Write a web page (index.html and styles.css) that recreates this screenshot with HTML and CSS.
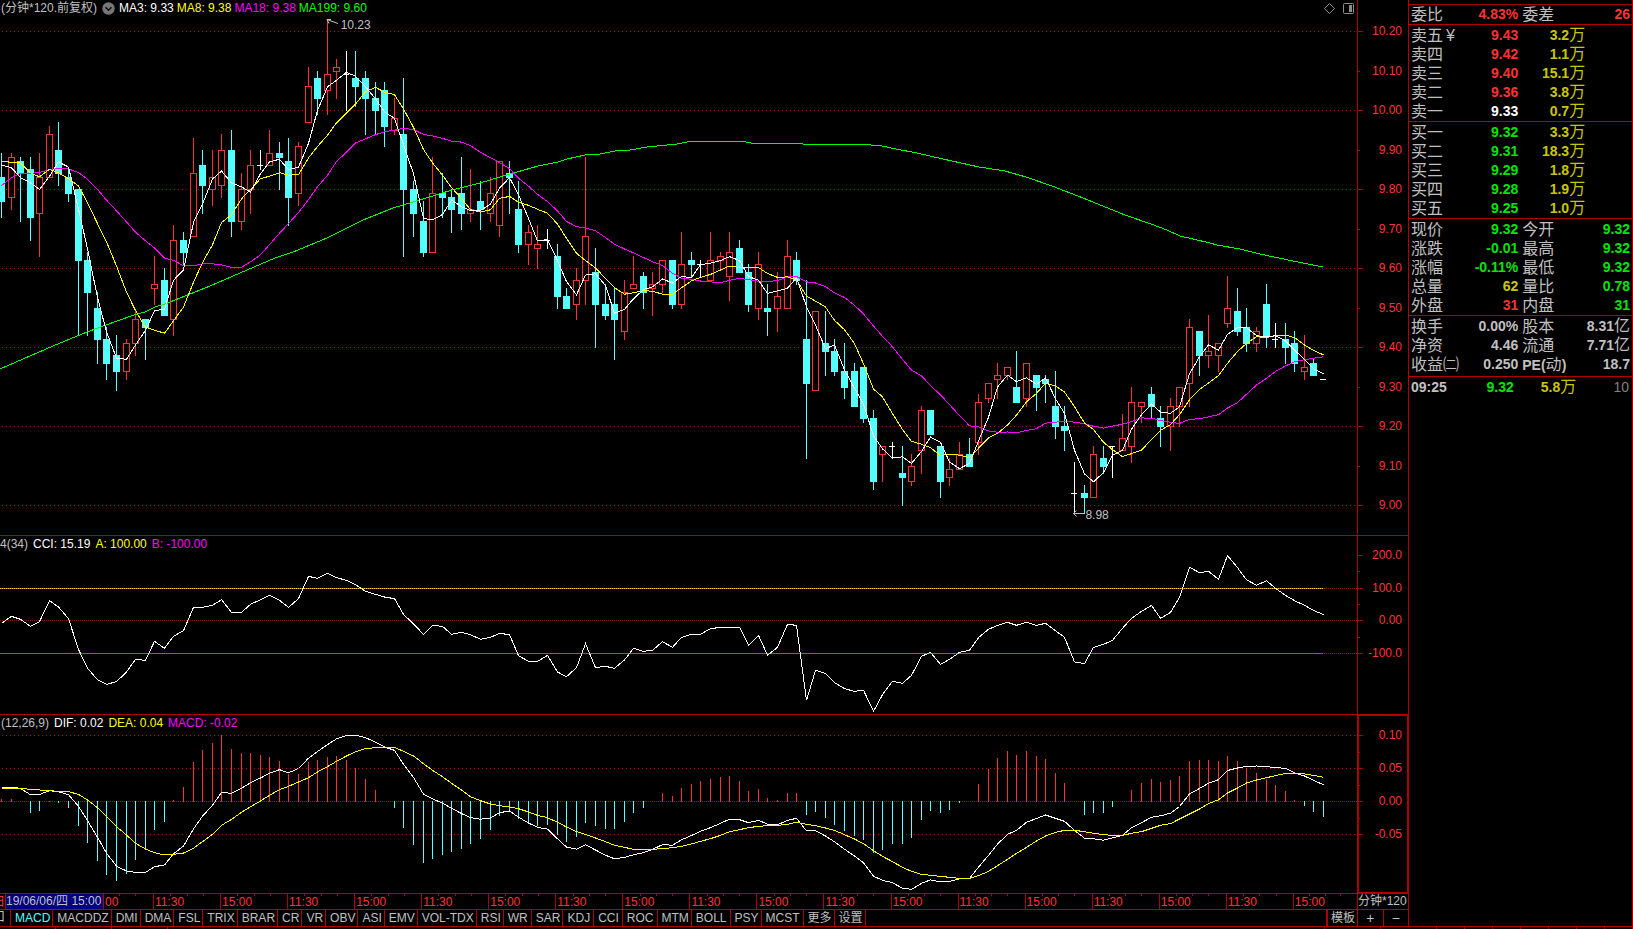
FILE: index.html
```html
<!DOCTYPE html>
<html lang="zh-CN">
<head>
<meta charset="utf-8">
<meta name="viewport" content="width=device-width, initial-scale=1">
<title>分钟*120 前复权</title>
<link rel="stylesheet" href="styles.css">
</head>
<body>
<div class="terminal">
  <div class="workspace">
    <main class="charts">
      <section class="panel panel-price">
        <div class="plot">
          <svg id="price" class="canvas" viewBox="0 0 1357 535" preserveAspectRatio="none" role="img" aria-label="K线"></svg>
          <header class="readout readout-price">
            <span class="c-gray">(分钟*120.前复权)</span>
            <button class="icon-button" type="button" aria-label="展开">
              <svg width="13" height="13" viewBox="0 0 13 13"><circle cx="6.5" cy="6.5" r="6.2" fill="#777"/><path d="M3.5 5.2l3 3 3-3" fill="none" stroke="#111" stroke-width="1.6"/></svg>
            </button>
            <span class="c-white">MA3: 9.33</span>
            <span class="c-yellow">MA8: 9.38</span>
            <span class="c-magenta">MA18: 9.38</span>
            <span class="c-green">MA199: 9.60</span>
          </header>
          <div class="tools">
            <button class="icon-button" type="button" aria-label="标记">
              <svg width="13" height="13" viewBox="0 0 13 13"><path d="M6.5 1.5l5 5-5 5-5-5z" fill="none" stroke="#8c8c8c"/></svg>
            </button>
            <button class="icon-button" type="button" aria-label="侧栏">
              <svg width="13" height="13" viewBox="0 0 13 13"><rect x="1.5" y="1.5" width="10" height="10" rx="1" fill="none" stroke="#8c8c8c"/><path d="M7 3h3v7H7z" fill="#8c8c8c"/></svg>
            </button>
          </div>
          <span class="note note-high">
            <svg width="13" height="8" viewBox="0 0 13 8"><path d="M1 1.5l11 4M1 1.5h4M1 1.5l2 4" fill="none" stroke="#c0c0c0"/></svg>10.23</span>
          <span class="note note-low">
            <svg width="12" height="8" viewBox="0 0 12 8"><path d="M0 3.5h12M.5 3.5l3-3M.5 3.5l3 3" fill="none" stroke="#c0c0c0"/></svg>8.98</span>
        </div>
        <ol class="axis axis-price">
          <li>10.20</li><li class="minor">10.10</li><li>10.00</li><li class="minor">9.90</li><li>9.80</li><li class="minor">9.70</li><li>9.60</li><li class="minor">9.50</li><li>9.40</li><li class="minor">9.30</li><li>9.20</li><li class="minor">9.10</li><li>9.00</li>
        </ol>
      </section>

      <section class="panel panel-cci">
        <div class="plot">
          <svg id="cci" class="canvas" viewBox="0 536 1357 178" preserveAspectRatio="none" role="img" aria-label="CCI"></svg>
          <header class="readout readout-cci">
            <span class="c-gray">4(34)</span>
            <span class="c-white">CCI: 15.19</span>
            <span class="c-yellow">A: 100.00</span>
            <span class="c-magenta">B: -100.00</span>
          </header>
        </div>
        <ol class="axis axis-cci">
          <li>200.0</li><li class="minor"></li><li>100.0</li><li class="minor"></li><li>0.00</li><li class="minor"></li><li>-100.0</li>
        </ol>
      </section>

      <section class="panel panel-macd">
        <div class="plot">
          <svg id="macd" class="canvas" viewBox="0 715 1357 178" preserveAspectRatio="none" role="img" aria-label="MACD"></svg>
          <header class="readout readout-macd">
            <span class="c-gray">(12,26,9)</span>
            <span class="c-white">DIF: 0.02</span>
            <span class="c-yellow">DEA: 0.04</span>
            <span class="c-magenta">MACD: -0.02</span>
          </header>
        </div>
        <ol class="axis axis-macd">
          <li>0.10</li><li class="minor"></li><li>0.05</li><li class="minor"></li><li>0.00</li><li class="minor"></li><li>-0.05</li>
        </ol>
      </section>

      <div class="timeline">
        <ol class="times">
          <li class="time-first"><span class="clip">日</span><span class="cursor-date">19/06/06/四 15:00</span><span class="rest">00</span></li>
          <li>11:30</li><li>15:00</li><li>11:30</li><li>15:00</li><li>11:30</li><li>15:00</li><li>11:30</li><li>15:00</li><li>11:30</li><li>15:00</li><li>11:30</li><li>15:00</li><li>11:30</li><li>15:00</li><li>11:30</li><li>15:00</li><li>11:30</li><li class="time-last">15:00</li>
        </ol>
        <span class="period">分钟*120</span>
      </div>

      <nav class="tabs">
        <div class="tab-list">
          <button class="tab tab-clip" type="button">口</button>
          <button class="tab active" type="button">MACD</button>
          <button class="tab" type="button">MACDDZ</button>
          <button class="tab" type="button">DMI</button>
          <button class="tab" type="button">DMA</button>
          <button class="tab" type="button">FSL</button>
          <button class="tab" type="button">TRIX</button>
          <button class="tab" type="button">BRAR</button>
          <button class="tab" type="button">CR</button>
          <button class="tab" type="button">VR</button>
          <button class="tab" type="button">OBV</button>
          <button class="tab" type="button">ASI</button>
          <button class="tab" type="button">EMV</button>
          <button class="tab" type="button">VOL-TDX</button>
          <button class="tab" type="button">RSI</button>
          <button class="tab wide" type="button">WR</button>
          <button class="tab" type="button">SAR</button>
          <button class="tab wide" type="button">KDJ</button>
          <button class="tab wide" type="button">CCI</button>
          <button class="tab wide" type="button">ROC</button>
          <button class="tab" type="button">MTM</button>
          <button class="tab wide" type="button">BOLL</button>
          <button class="tab" type="button">PSY</button>
          <button class="tab wide" type="button">MCST</button>
          <button class="tab" type="button">更多</button>
          <button class="tab" type="button">设置</button>
          <button class="tab tab-template" type="button">模板</button>
        </div>
        <div class="zoomers">
          <button class="zoomer" type="button">+</button>
          <button class="zoomer" type="button">−</button>
        </div>
      </nav>
    </main>

    <aside class="quote">
      <table class="pairs pairs-ratio">
        <tr><th>委比</th><td class="up">4.83%</td><th>委差</th><td class="up">26</td></tr>
      </table>
      <table class="book">
        <tr><th>卖五<span class="yen">¥</span></th><td class="up">9.43</td><td class="vol">3.2<i>万</i></td><td></td></tr>
        <tr><th>卖四</th><td class="up">9.42</td><td class="vol">1.1<i>万</i></td><td></td></tr>
        <tr><th>卖三</th><td class="up">9.40</td><td class="vol">15.1<i>万</i></td><td></td></tr>
        <tr><th>卖二</th><td class="up">9.36</td><td class="vol">3.8<i>万</i></td><td></td></tr>
        <tr><th>卖一</th><td class="flat">9.33</td><td class="vol">0.7<i>万</i></td><td></td></tr>
      </table>
      <table class="book">
        <tr><th>买一</th><td class="down">9.32</td><td class="vol">3.3<i>万</i></td><td></td></tr>
        <tr><th>买二</th><td class="down">9.31</td><td class="vol">18.3<i>万</i></td><td></td></tr>
        <tr><th>买三</th><td class="down">9.29</td><td class="vol">1.8<i>万</i></td><td></td></tr>
        <tr><th>买四</th><td class="down">9.28</td><td class="vol">1.9<i>万</i></td><td></td></tr>
        <tr><th>买五</th><td class="down">9.25</td><td class="vol">1.0<i>万</i></td><td></td></tr>
      </table>
      <table class="pairs">
        <tr><th>现价</th><td class="down">9.32</td><th>今开</th><td class="down">9.32</td></tr>
        <tr><th>涨跌</th><td class="down">-0.01</td><th>最高</th><td class="down">9.32</td></tr>
        <tr><th>涨幅</th><td class="down">-0.11%</td><th>最低</th><td class="down">9.32</td></tr>
        <tr><th>总量</th><td class="vol">62</td><th>量比</th><td class="down">0.78</td></tr>
        <tr><th>外盘</th><td class="up">31</td><th>内盘</th><td class="down">31</td></tr>
      </table>
      <table class="pairs pairs-basis">
        <tr><th>换手</th><td>0.00%</td><th>股本</th><td>8.31<i>亿</i></td></tr>
        <tr><th>净资</th><td>4.46</td><th>流通</th><td>7.71<i>亿</i></td></tr>
        <tr><th>收益㈡</th><td>0.250</td><th><b>PE(</b>动<b>)</b></th><td>18.7</td></tr>
      </table>
      <table class="ticks">
        <tr><td class="tick-time">09:25</td><td class="down">9.32</td><td class="vol">5.8<i>万</i></td><td class="count">10</td></tr>
      </table>
    </aside>
  </div>
  <footer class="status"><span></span><span></span><span></span><span class="grow"></span><span></span><span></span><span class="half"></span><span class="half"></span><span class="half"></span><span class="half"></span><span class="half"></span><span class="half"></span><span class="half"></span></footer>
</div>
<script src="chart.js"></script>
</body>
</html>
```

FILE: styles.css
```css
:root {
  --line: #b00000;
  --red: #ff3232;
  --cyan: #54ffff;
  --gray: #c0c0c0;
  --yellow: #ffff00;
  --olive: #c8c800;
  --green: #00e600;
  --magenta: #ff00ff;
}

* { box-sizing: border-box; }

body {
  margin: 0;
  background: #000;
  color: var(--gray);
  font: 12px/15px "Liberation Sans", "Noto Sans CJK SC", sans-serif;
}

button {
  margin: 0;
  padding: 0;
  border: 0;
  background: none;
  color: inherit;
  font: inherit;
}

ol { margin: 0; padding: 0; list-style: none; }
i { font-style: normal; }

.c-gray { color: var(--gray); }
.c-white { color: #fff; }
.c-yellow { color: var(--yellow); }
.c-magenta { color: var(--magenta); }
.c-green { color: #00ff00; }

.terminal {
  display: flex;
  flex-direction: column;
  height: 100vh;
  min-height: 600px;
  overflow: hidden;
}

.workspace {
  flex: 1;
  display: grid;
  grid-template-columns: minmax(0, 1fr) 225px;
  min-height: 0;
}

/* chart column */
.charts {
  display: grid;
  grid-template-rows: 535fr 179fr 179fr 16px 17px;
  min-width: 0;
  min-height: 0;
}

.panel {
  display: grid;
  grid-template-columns: minmax(0, 1fr) 51px;
  min-height: 0;
}
.panel + .panel { border-top: 1px solid var(--line); }

.plot { position: relative; min-height: 0; overflow: hidden; }
.canvas { display: block; width: 100%; height: 100%; shape-rendering: crispEdges; }

.readout {
  position: absolute;
  top: 1px;
  left: 0;
  display: flex;
  gap: 5px;
  white-space: nowrap;
}
.readout-price { left: 1px; gap: 3px; }
.readout-price .icon-button { margin: 0 1px 0 2px; }
.readout-macd { left: 1px; }

.icon-button { display: flex; align-items: center; }
.tools { position: absolute; top: 2px; right: 2px; display: flex; gap: 6px; }

.note { position: absolute; display: flex; gap: 2px; line-height: 14px; }
.note-high { left: 24%; top: 3.3%; }
.note-low { left: 79.1%; top: 95%; gap: 0; }
.note-low svg { margin-top: 2px; }

.axis {
  display: flex;
  flex-direction: column;
  justify-content: space-between;
  border-left: 1px solid var(--line);
  color: var(--red);
  text-align: right;
  min-height: 0;
}
.axis li {
  display: flex;
  align-items: center;
  justify-content: space-between;
  height: 15px;
  padding-right: 6px;
}
.axis li::before { content: ""; width: 5px; height: 1px; background: var(--line); }
.axis .minor::before { width: 2px; }
.axis-price { padding: 24px 0 22px; }
.axis-cci { padding: 12px 0 53px; }
.axis-macd { padding: 13px 0 51px; box-shadow: inset 0 0 0 1px var(--line); }

/* time scale */
.timeline {
  display: grid;
  grid-template-columns: minmax(0, 1fr) 51px;
  border-top: 1px solid var(--line);
}
.times { display: flex; min-width: 0; color: var(--red); }
.times li {
  flex: 67 1 0;
  min-width: 0;
  padding-left: 1px;
  border-left: 1px solid var(--line);
  overflow: hidden;
  line-height: 16px;
  background:
    linear-gradient(var(--line), var(--line)) 25% 0 / 1px 2px no-repeat,
    linear-gradient(var(--line), var(--line)) 50% 0 / 1px 2px no-repeat,
    linear-gradient(var(--line), var(--line)) 75% 0 / 1px 2px no-repeat;
}
.times .time-first {
  flex: none;
  width: 153px;
  display: flex;
  padding: 0;
  border: 0;
  background:
    linear-gradient(var(--line), var(--line)) 78% 0 / 1px 2px no-repeat,
    linear-gradient(var(--line), var(--line)) 89% 0 / 1px 2px no-repeat;
}
.times .time-last { flex-grow: 64; }
.clip { display: flex; justify-content: flex-end; width: 5px; overflow: hidden; }
.cursor-date {
  flex: none;
  width: 99px;
  border: solid var(--line);
  border-width: 0 1px;
  background: #000080;
  color: var(--gray);
  line-height: 14px;
  white-space: nowrap;
}
.rest { padding-left: 1px; }
.period { border-left: 1px solid var(--line); white-space: nowrap; overflow: hidden; }

/* indicator tabs */
.tabs {
  display: grid;
  grid-template-columns: minmax(0, 1fr) 51px;
  border-top: 1px solid var(--line);
}
.tab-list { display: flex; min-width: 0; overflow: hidden; }
.tab {
  flex: none;
  padding: 0 2px 0 4px;
  border-right: 1px solid var(--line);
  white-space: nowrap;
}
.tab.active { color: var(--cyan); }
.tab.wide { padding-right: 3px; }
.tab-clip { display: flex; justify-content: flex-end; width: 11px; padding: 0 5px 0 0; overflow: hidden; }
.tab-template { margin-left: auto; padding: 0 2px 0 3px; border-right: 0; border-left: 2px solid var(--line); }
.zoomers { display: flex; border-left: 1px solid var(--line); }
.zoomer { flex: 1; font-size: 14px; }
.zoomer + .zoomer { border-left: 1px solid var(--line); }

/* quote column */
.quote {
  padding-top: 4px;
  border: solid var(--line);
  border-width: 0 1px;
  color: var(--gray);
}
.quote table {
  width: 100%;
  table-layout: fixed;
  border-spacing: 0;
  border-collapse: separate;
  padding: 1px 0 0;
  border-bottom: 1px solid var(--line);
  font: bold 14px/19px "Liberation Sans", "Noto Sans CJK SC", sans-serif;
}
.quote th,
.quote td { height: 19px; padding: 0; line-height: 17px; vertical-align: middle; white-space: nowrap; }
.quote th {
  width: 24%;
  padding-left: 2px;
  font-weight: normal;
  font-size: 16px;
  text-align: left;
}
.quote th b { font-size: 14px; }
.quote td { text-align: right; }
.quote td i { font-size: 16px; font-weight: normal; line-height: 16px; }
.yen { padding-left: 3px; }

.quote .pairs th { width: 25%; }
.quote .pairs th:nth-child(3) { padding-left: 4px; }
.quote .pairs td { width: 24%; }
.quote .pairs td:last-child { width: 26%; padding-right: 2px; }
.quote .pairs-ratio { padding: 0; border-top: 1px solid var(--line); }
.quote .pairs-basis { padding-bottom: 2px; }
.quote .book td { width: 25%; }
.quote .book td:nth-child(3) { width: 30%; }
.quote .book td:last-child { width: 21%; }
.quote .ticks { border: 0; }
.quote .ticks td { width: 24%; }
.quote .ticks .tick-time { width: 23%; padding-left: 2px; text-align: left; }
.quote .ticks .vol { width: 28%; }
.quote .ticks .count { width: 25%; padding-right: 3px; color: #808080; font-weight: normal; }

.quote .up { color: var(--red); }
.quote .down { color: var(--green); }
.quote .vol { color: var(--olive); }
.quote .flat { color: #fff; }

/* edge of the status strip */
.status { display: flex; height: 3px; border-top: 1px solid var(--line); overflow: hidden; }
.status span { flex: none; width: 56px; border-right: 1px solid var(--line); }
.status .grow { flex: 1; }
.status .half { width: 28px; }
```

FILE: chart.js
```js
const NS = "http://www.w3.org/2000/svg";
const RED = "#ff3232", CYAN = "#54ffff", LINE = "#b00000";

// open, high, low, close in cents
const bars = [
  [983,989,973,977],[978,989,975,988],[987,988,972,984],[985,988,967,973],[974,989,963,983],
  [983,996,983,994],[990,997,981,984],[983,985,977,979],[980,980,943,962],[962,964,943,954],
  [950,954,936,942],[942,945,932,936],[938,943,929,934],[934,942,932,941],[941,949,938,947],
  [947,947,937,945],[955,963,951,956],[957,960,948,948],[947,971,943,967],[967,969,961,964],
  [968,993,968,984],[986,990,974,981],[980,990,976,983],[981,994,978,990],[990,995,968,972],
  [972,984,970,980],[980,990,974,986],[986,990,985,986],[986,995,986,989],[989,992,980,988],
  [987,993,971,978],[979,992,976,991],[997,1011,997,1006],[1008,1010,999,1003],[1005,1023,999,1009],
  [1010,1013,1003,1011],[1009,1015,1000,1009],[1008,1015,1001,1006],[1008,1010,994,1003],[1003,1007,994,1000],
  [1005,1007,991,996],[995,1003,994,998],[994,1008,963,980],[980,982,968,974],[972,977,963,964],
  [964,988,964,979],[979,984,973,978],[978,980,969,975],[979,988,970,974],[974,985,972,975],
  [977,982,970,975],[974,983,972,979],[971,987,968,987],[984,987,974,983],[975,982,964,966],
  [966,971,961,969],[965,971,960,966],[967,970,965,967],[963,966,950,953],[953,955,950,950],
  [951,960,947,957],[957,988,951,968],[959,965,940,951],[951,956,947,948],[951,955,937,947],
  [944,957,942,954],[955,963,955,956],[958,959,950,954],[955,959,948,956],[956,962,954,962],
  [962,962,950,951],[951,969,950,961],[962,964,958,961],[961,962,958,961],[957,969,957,962],
  [962,964,960,963],[958,969,952,964],[965,967,959,959],[959,961,949,951],[950,964,947,961],
  [950,956,943,949],[950,959,944,953],[950,967,950,963],[962,964,956,957],[942,957,912,931],
  [929,949,929,949],[941,949,933,939],[939,942,933,934],[934,941,927,930],[934,936,925,925],
  [935,935,921,922],[922,924,904,906],[913,915,906,915],[915,916,912,915],[908,915,900,907],
  [906,913,905,910],[914,925,908,924],[924,924,918,918],[915,915,902,906],[907,912,905,909],
  [909,916,909,913],[913,917,910,910],[916,928,913,926],[927,931,926,931],[932,936,927,933],
  [933,935,932,935],[930,939,926,926],[927,936,925,936],[933,933,924,930],[932,933,926,931],
  [925,934,917,920],[920,925,914,919],[903,911,898,903],[903,905,898,902],[902,915,902,913],
  [912,915,908,910],[915,915,907,915],[914,923,914,917],[915,930,911,926],[925,926,921,926],
  [928,930,922,925],[922,925,915,920],[920,927,914,925],[925,930,920,930],[931,947,925,945],
  [944,944,933,938],[938,948,935,939],[938,941,934,941],[946,958,945,950],[949,955,943,944],
  [945,950,939,941],[941,945,939,944],[951,956,940,943],[942,946,940,942],[942,946,936,940],
  [941,944,934,936],[934,943,932,935],[936,937,933,933],[932,932,932,932]
];

// averages whose window reaches back before the first visible bar
const lead3 = [986.2, 985.5];
const lead8 = [987.1, 986.9, 986.7, 984.2, 983.2, 985.1, 984.2];
const lead18 = [981, 983, 984.1, 984.1, 984.3, 985, 985.3, 985.2, 984.3, 982.6, 980, 977.3, 974.6, 971.8, 969.2, 967, 965.2];

const ma199 = "0,369 23,359 53,346 87,332 117,321 137,314 145,312 155,307 165,304 190,294 210,286 240,273 275,258 293,252 327,238 343,230 363,220 393,208 413,202 423,199 452,190 480,183 510,174 538,166 558,162 567,159 585,155 600,154 615,151 630,150 647,147 677,144 690,141.5 743,141.5 754,143.5 802,143.5 804,144.5 866,144.5 882,146 896,149 917,153 943,159 979,167 1005,171 1026,177 1052,186 1083,198 1125,215 1151,224 1167,230 1180,236 1193,239 1210,243 1217,245 1240,249 1260,254 1293,261 1323,267";

// thirds of a pixel below y = 535
const cci = [265,244,253,274,260,197,216,251,343,400,434,448,440,411,373,376,319,340,304,287,217,217,211,194,232,232,208,194,181,196,217,191,124,130,115,128,136,149,169,178,186,191,238,267,298,271,274,298,292,299,313,307,295,299,362,379,379,361,411,425,398,326,398,394,400,375,340,349,346,320,337,307,298,298,281,277,277,277,331,301,361,337,268,271,496,406,415,443,461,469,466,529,479,439,445,421,364,352,388,373,352,346,308,283,271,262,271,262,271,265,287,307,381,386,337,328,316,280,250,229,211,250,232,187,97,113,109,133,62,98,134,151,137,160,181,197,211,226,239];

// histogram tips and signal line, thirds of a pixel below y = 700
const hist = [297,297,304,339,333,303,309,324,378,429,483,525,543,522,480,447,390,366,300,261,186,150,129,105,147,159,159,165,171,183,222,222,186,180,171,168,180,204,237,270,304,324,384,435,489,477,465,456,447,432,417,390,348,330,357,372,378,375,405,426,411,369,378,387,387,366,339,324,304,279,288,264,252,243,237,231,228,243,273,267,294,300,279,279,345,336,354,375,393,408,420,459,450,432,432,414,360,333,339,330,309,304,252,207,174,153,165,153,168,177,219,249,304,345,339,339,321,304,270,249,237,246,240,228,183,180,180,183,168,183,204,219,237,255,273,300,318,336,351];
const dea = [265,265,265,268,270,272,274,275,283,300,323,350,380,405,430,447,458,465,463,459,445,425,403,376,358,337,320,303,286,269,259,246,233,216,200,184,168,155,146,143,141,142,154,168,191,211,230,250,270,290,302,312,317,321,326,336,346,353,367,381,395,403,414,425,436,442,448,449,448,446,443,439,432,424,416,406,395,389,383,379,377,376,373,367,373,377,384,391,404,417,431,452,469,485,502,514,523,526,529,532,535,535,527,514,497,478,460,442,423,408,397,391,391,395,400,404,406,406,400,395,385,376,371,357,342,327,311,299,279,264,249,240,233,227,220,220,222,226,232];

const xAt = i => Math.round(1 + 9.58 * i);
const yAt = cents => 505.5 - (cents - 900) * 3.95;

function add(parent, tag, attrs) {
  const el = document.createElementNS(NS, tag);
  for (const key in attrs) el.setAttribute(key, attrs[key]);
  parent.appendChild(el);
}
function line(svg, x1, y1, x2, y2, stroke, dash) {
  const attrs = { x1, y1, x2, y2, stroke };
  if (dash) attrs["stroke-dasharray"] = dash;
  add(svg, "line", attrs);
}
function curve(svg, ys, stroke) {
  const points = ys.map((y, i) => `${xAt(i) + 0.5},${y}`).join(" ");
  add(svg, "polyline", { points, stroke, fill: "none" });
}
function average(n, lead) {
  return bars.map((_, i) => {
    if (i < lead.length) return yAt(lead[i]);
    let sum = 0;
    for (let k = i - n + 1; k <= i; k++) sum += bars[k][3];
    return yAt(sum / n);
  });
}

const price = document.getElementById("price");
for (let p = 900; p <= 1020; p += 20) line(price, 2, yAt(p), 1357, yAt(p), LINE, "1 3");
bars.forEach(([open, high, low, close], i) => {
  const x = xAt(i);
  const top = Math.floor(yAt(Math.max(open, close)));
  const bottom = Math.floor(yAt(Math.min(open, close)));
  const color = close > open ? RED : close < open ? CYAN : "#ffffff";
  const yHigh = Math.floor(yAt(high)), yLow = Math.floor(yAt(low)) + 1;
  if (high > low) line(price, x + 0.5, yHigh, x + 0.5, yLow, color);
  if (close > open) {
    add(price, "rect", { x: x - 2.5, y: top + 0.5, width: 6, height: bottom - top, fill: "#000", stroke: color });
  } else {
    add(price, "rect", { x: x - 3, y: top, width: close < open ? 7 : 6, height: bottom - top + 1, fill: color });
  }
});
add(price, "polyline", { points: ma199, stroke: "#00ff00", fill: "none" });
curve(price, average(18, lead18), "#ff00ff");
curve(price, average(8, lead8), "#ffff00");
curve(price, average(3, lead3), "#ffffff");

const cciPlot = document.getElementById("cci");
for (const y of [588.5, 620.5, 653.5]) line(cciPlot, 0, y, 1357, y, LINE, "1 1");
line(cciPlot, 0, 588.5, 1323, 588.5, RED);
line(cciPlot, 0, 588.5, 1323, 588.5, "#ffff00", "1 1");
line(cciPlot, 0, 653.5, 1323, 653.5, RED);
line(cciPlot, 0, 653.5, 1323, 653.5, "#ff00ff", "1 1");
curve(cciPlot, cci.map(v => 535 + v / 3), "#ffffff");

const macd = document.getElementById("macd");
for (const y of [735.5, 768.5, 834.5]) line(macd, 2, y, 1357, y, LINE, "1 3");
line(macd, 0, 801.5, 1357, 801.5, LINE, "1 1");
const size = hist.map(v => v === 304 ? 0 : v < 304 ? v - 303 : v - 306);
hist.forEach((v, i) => {
  if (v === 304) return;
  const x = xAt(i) + 0.5;
  line(macd, x, v < 304 ? 802 : 801, x, 700 + v / 3, v < 304 ? RED : CYAN);
});
curve(macd, dea.map((v, i) => 700 + (v + size[i] / 2) / 3), "#ffffff");
curve(macd, dea.map(v => 700 + v / 3), "#ffff00");
```
